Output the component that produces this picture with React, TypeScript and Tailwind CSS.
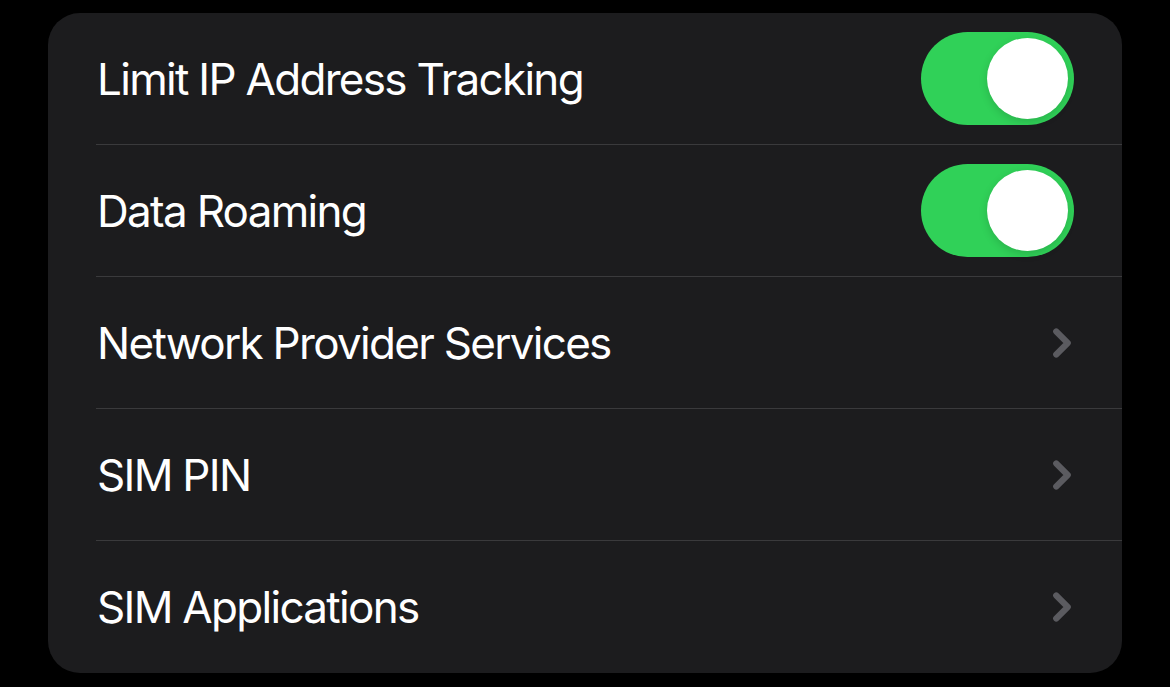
import { ChevronRight } from 'lucide-react'

type Row = { label: string; kind: 'toggle' | 'link' }

const rows: Row[] = [
  { label: 'Limit IP Address Tracking', kind: 'toggle' },
  { label: 'Data Roaming', kind: 'toggle' },
  { label: 'Network Provider Services', kind: 'link' },
  { label: 'SIM PIN', kind: 'link' },
  { label: 'SIM Applications', kind: 'link' },
]

function Toggle() {
  return (
    <div className="w-[153px] h-[93px] rounded-full bg-[#30d158] flex items-center justify-end pr-[6px]">
      <div className="w-[81px] h-[81px] rounded-full bg-white shadow-[0_3px_8px_rgba(0,0,0,0.15)]" />
    </div>
  )
}

export default function App() {
  return (
    <div className="w-[1170px] h-[687px] bg-black pt-[13px] pl-[48px] font-['Inter',sans-serif]">
      <div className="w-[1074px] rounded-[32px] bg-[#1c1c1e] overflow-hidden">
        {rows.map((row, i) => (
          <div key={row.label} className="pl-[48px]">
            <div
              className={`h-[132px] flex items-center justify-between pr-[48px] ${
                i < rows.length - 1 ? 'border-b border-[#3a3a3c]' : ''
              }`}
            >
              <span className="text-white text-[44px] tracking-[-1.7px] leading-none pl-[1px]">{row.label}</span>
              {row.kind === 'toggle' ? (
                <Toggle />
              ) : (
                <ChevronRight className="text-[#5b5b60] w-[46px] h-[46px] mr-[-11px]" strokeWidth={3.2} />
              )}
            </div>
          </div>
        ))}
      </div>
    </div>
  )
}
